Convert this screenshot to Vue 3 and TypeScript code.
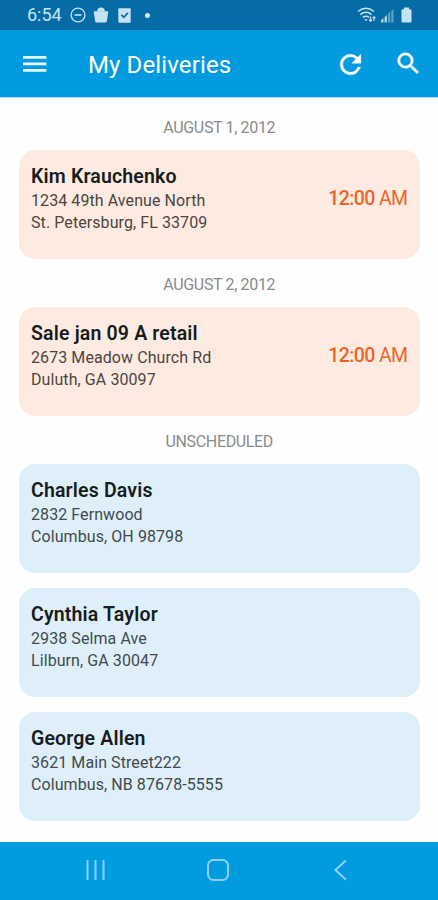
<script setup lang="ts">
interface Delivery {
  name: string
  street: string
  city: string
  time?: string
  period?: string
}

interface Group {
  label: string
  items: Delivery[]
}

const groups: Group[] = [
  {
    label: 'AUGUST 1, 2012',
    items: [{ name: 'Kim Krauchenko', street: '1234 49th Avenue North', city: 'St. Petersburg, FL 33709', time: '12:00', period: 'AM' }],
  },
  {
    label: 'AUGUST 2, 2012',
    items: [{ name: 'Sale jan 09 A retail', street: '2673 Meadow Church Rd', city: 'Duluth, GA 30097', time: '12:00', period: 'AM' }],
  },
  {
    label: 'UNSCHEDULED',
    items: [
      { name: 'Charles Davis', street: '2832 Fernwood', city: 'Columbus, OH 98798' },
      { name: 'Cynthia Taylor', street: '2938 Selma Ave', city: 'Lilburn, GA 30047' },
      { name: 'George Allen', street: '3621 Main Street222', city: 'Columbus, NB 87678-5555' },
    ],
  },
]
</script>

<template>
  <div class="screen">
    <div class="status">
      <span class="clock">6:54</span>
      <svg class="dnd" width="16" height="16" viewBox="0 0 16 16" fill="none" stroke="currentColor" stroke-width="1.4">
        <circle cx="8" cy="8" r="6.9" />
        <path d="M4.5 8h7" stroke-width="1.6" />
      </svg>
      <svg class="bag" width="16" height="16" viewBox="0 0 16 16" fill="currentColor">
        <path d="M1.800 4.200h12.400q1.100 0 1 1l-1.300 8.700q-.3 1.500-1.800 1.500H3.900q-1.500 0-1.800-1.500L.8 5.200q-.1-1 1-1z" />
        <path d="M4.800 4.600Q4.800 1.300 8 1.300t3.200 3.300" stroke="currentColor" stroke-width="1.400" />
      </svg>
      <svg class="task" width="13" height="15" viewBox="0 0 13 15">
        <rect x=".3" y=".3" width="12.400" height="14.400" rx="1" fill="currentColor" />
        <path d="M3.300 6.800l2.400 2.500 4.200-4.400" fill="none" stroke="#066ca5" stroke-width="1.600" />
      </svg>
      <span class="dot"></span>
      <svg class="wifi" width="20" height="16" viewBox="0 0 20 16" fill="none" stroke="currentColor" stroke-width="1.500">
        <path d="M1 4.500q8-6.500 16 0M3.400 7.600q5.600-4.500 11.200 0M5.800 10.500q3.200-2.500 6.400 0" />
        <path d="M7.300 12.200h3.400L9 14.300z" fill="currentColor" stroke="none" />
        <path d="M13.600 9.500v4.700M12.200 12.700l1.400 1.600 1.400-1.600M17 14V9.800M15.700 11.200l1.300-1.500 1.400 1.500" stroke-width="1.100" />
      </svg>
      <svg class="signal" width="13" height="15" viewBox="0 0 13 15" fill="currentColor">
        <path d="M0 14.500V12L2.500 10v4.500zM3.500 14.500V9.200L6 7v7.500z" opacity=".85" />
        <path d="M7 14.500V6l2.300-2.200v10.700zM10.300 14.500V2.900L12.500 1v13.500z" opacity=".45" />
      </svg>
      <svg class="battery" width="11" height="16" viewBox="0 0 11 16" fill="currentColor">
        <path d="M3 .5h5v1.700h1.200q1.300 0 1.300 1.300v10.700q0 1.300-1.300 1.300H1.800Q.5 15.500.5 14.200V3.500q0-1.300 1.300-1.300H3z" />
      </svg>
    </div>

    <header class="bar">
      <svg class="menu" width="24" height="18" viewBox="0 0 24 18" stroke="#e8f7fe" stroke-width="2.600">
        <path d="M0 2.400h23.400M0 8.900h23.400M0 15.400h23.400" />
      </svg>
      <h1 class="title">My Deliveries</h1>
      <svg class="refresh" width="31" height="31" viewBox="0 0 24 24" fill="#fff" stroke="#fff" stroke-width=".3">
        <path d="M17.650 6.350A7.958 7.958 0 0 0 12 4a8 8 0 1 0 7.730 10h-2.080A5.990 5.990 0 0 1 12 18a6 6 0 1 1 0-12c1.660 0 3.140.690 4.220 1.780L13 11h7V4z" />
      </svg>
      <svg class="search" width="29" height="29" viewBox="0 0 24 24" fill="#fff" stroke="#fff" stroke-width=".3">
        <path d="M15.500 14h-.790l-.280-.270A6.471 6.471 0 0 0 16 9.500 6.500 6.500 0 1 0 9.500 16c1.610 0 3.090-.590 4.230-1.570l.270.280v.790l5 4.990L20.490 19zm-6 0a4.500 4.500 0 1 1 0-9 4.500 4.500 0 0 1 0 9z" />
      </svg>
    </header>

    <main class="list">
      <section v-for="group in groups" :key="group.label">
        <h2 class="date">{{ group.label }}</h2>
        <div class="cards">
          <article v-for="item in group.items" :key="item.name" class="card" :class="{ scheduled: item.time }">
            <div class="info">
              <h3 class="name">{{ item.name }}</h3>
              <p class="line">{{ item.street }}</p>
              <p class="line">{{ item.city }}</p>
            </div>
            <span v-if="item.time" class="time"><b class="hour">{{ item.time }}</b> {{ item.period }}</span>
          </article>
        </div>
      </section>
    </main>

    <nav class="nav">
      <svg width="24" height="24" viewBox="0 0 24 24" fill="none" stroke="currentColor" stroke-width="2">
        <path d="M3.500 2v20M11.500 2v20M19.500 2v20" />
      </svg>
      <svg width="24" height="24" viewBox="0 0 24 24" fill="none" stroke="currentColor" stroke-width="2">
        <rect x="2" y="2" width="20" height="20" rx="5.500" />
      </svg>
      <svg width="24" height="24" viewBox="0 0 24 24" fill="none" stroke="currentColor" stroke-width="2">
        <path d="M17.800 2.500L7.500 12l10.300 9.500" />
      </svg>
    </nav>
  </div>
</template>

<style>
body {
  margin: 0;
  background: #fff;
}
</style>

<style scoped>
.screen {
  display: flex;
  flex-direction: column;
  width: 438px;
  height: 900px;
  overflow: hidden;
  background: #fefefe;
  font-family: Roboto, "Liberation Sans", sans-serif;
}
h1, h2, h3, p {
  margin: 0;
  font-weight: 400;
  white-space: nowrap;
}
svg {
  display: block;
  flex: none;
}
.status {
  display: flex;
  align-items: center;
  flex: none;
  box-sizing: border-box;
  height: 30px;
  padding-left: 27px;
  background: #066ca5;
  color: #c5e2f2;
}
.clock {
  width: 43px;
  font-size: 18px;
  line-height: 32px;
}
.bag { margin-left: 7px; }
.task { margin-left: 9px; }
.dot {
  width: 5px;
  height: 5px;
  margin-left: 14px;
  border-radius: 50%;
  background: #d8edf8;
}
.wifi {
  margin-left: auto;
}
.signal { margin-left: 4px; }
.battery { margin: 0 26px 0 7px; }
.bar {
  display: flex;
  align-items: center;
  flex: none;
  box-sizing: border-box;
  height: 68px;
  padding: 1px 15px 0 23px;
  border-bottom: 1px solid #a3d8f3;
  background: #029be0;
  color: #fff;
}
.menu { margin-top: -1px; }
.title {
  margin: 2px auto 0 41px;
  font-size: 24px;
  letter-spacing: .12px;
  line-height: 30px;
}
.search { margin: -1px 0 0 28px; }
.list {
  flex: 1;
  padding: 3.500px 18px 0 18.500px;
}
.date {
  height: 48.200px;
  color: #8b8b8b;
  font-size: 16px;
  letter-spacing: -.35px;
  line-height: 52px;
  text-align: center;
}
.cards {
  display: flex;
  flex-direction: column;
  gap: 15px;
}
.card {
  display: flex;
  justify-content: space-between;
  box-sizing: border-box;
  height: 109px;
  padding: 14px 12.500px 0 12.500px;
  border-radius: 16px;
  background: #deeff9;
}
.card.scheduled { background: #fdebe2; }
.name {
  color: #181c1e;
  font-size: 19.500px;
  font-weight: 600;
  letter-spacing: .17px;
  line-height: 26px;
}
.line {
  color: #424a4e;
  font-size: 16px;
  letter-spacing: .08px;
  line-height: 22px;
}
.scheduled .line { color: #4e4541; }
.time {
  margin-top: 22px;
  color: #ec6526;
  font-size: 19.500px;
  letter-spacing: -.6px;
  line-height: 26px;
}
.hour { font-weight: 500; }
.nav {
  display: flex;
  align-items: center;
  justify-content: space-between;
  flex: none;
  box-sizing: border-box;
  height: 58px;
  padding: 0 86px 2px 84px;
  background: #029be0;
  color: #8fd1f2;
}
</style>
